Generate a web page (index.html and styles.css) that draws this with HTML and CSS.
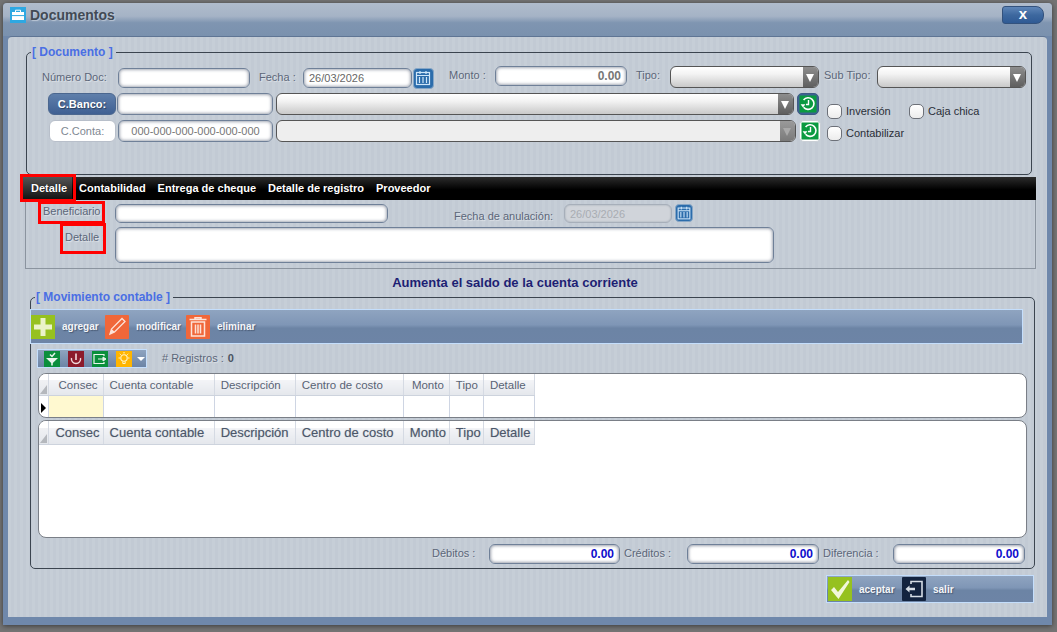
FILE: index.html
```html
<!DOCTYPE html>
<html lang="es">
<head>
  <meta charset="UTF-8" />
  <title>Documentos</title>
  <link rel="stylesheet" href="styles.css">
</head>
<body>

  <svg class="defs" width="0" height="0">
    <symbol id="ico-cal" viewBox="0 0 20 20">
      <rect x="3.5" y="4.5" width="13" height="12" fill="none" stroke="#cfe6f9" stroke-width="1.2"/>
      <path d="M3.5 7.5h13M7 3v3M13 3v3M6.5 9v6M10 9v6M13.5 9v6" stroke="#cfe6f9" stroke-width="1.2" fill="none"/>
    </symbol>
    <symbol id="ico-refresh" viewBox="0 0 20 20">
      <rect x="1.500" y="1.500" width="17" height="17" fill="#0a9a40"/>
      <path d="M5.600 13.200A5.800 5.800 0 1 0 5.600 6" fill="none" stroke="#fff" stroke-width="1.600"/>
      <path d="M2.600 10.300h4.800L5 13.400z" fill="#fff"/>
      <path d="M10.500 6v4.500H8" fill="none" stroke="#fff" stroke-width="1.400"/>
    </symbol>
  </svg>

  <div class="window">
    <div class="titlebar">
      <svg class="title-icon" viewBox="0 0 16 16" width="16" height="16">
        <rect width="16" height="16" fill="#2ea8e2"/>
        <path d="M2 5h12v8H2z" fill="#fff"/>
        <path d="M5.5 5V3.2h5V5" fill="none" stroke="#fff" stroke-width="1"/>
        <path d="M2 8.6h12" stroke="#2ea8e2" stroke-width="1"/>
      </svg>
      <span class="title-text">Documentos</span>
      <div class="close-btn">x</div>
    </div>

    <div class="panel">

      <fieldset class="group group-doc">
        <legend>[ Documento ]</legend>

        <div class="row row-1">
          <span class="lbl w-num">Número Doc:</span>
          <div class="field w-132"></div>
          <span class="lbl w-fecha">Fecha :</span>
          <div class="field date w-109">26/03/2026</div>
          <div class="cal-btn"><svg width="20" height="20"><use href="#ico-cal"/></svg></div>
          <span class="lbl lbl-up w-monto">Monto :</span>
          <div class="field num field-up w-132">0.00</div>
          <span class="lbl lbl-up w-tipo">Tipo:</span>
          <div class="select select-up w-149"><span class="arrow"></span></div>
          <span class="lbl lbl-up w-sub">Sub Tipo:</span>
          <div class="select select-up w-149"><span class="arrow"></span></div>
        </div>

        <div class="accounts">
          <div class="acc-rows">
            <div class="row row-2">
              <div class="side-btn side-on">C.Banco:</div>
              <div class="field"></div>
              <div class="select w-518"><span class="arrow"></span></div>
              <div class="go-btn go-on"><svg width="20" height="20"><use href="#ico-refresh"/></svg></div>
            </div>
            <div class="row row-3">
              <div class="side-btn">C.Conta:</div>
              <div class="field mask w-155">000-000-000-000-000-000</div>
              <div class="select off w-520"><span class="arrow"></span></div>
              <div class="go-btn"><svg width="20" height="20"><use href="#ico-refresh"/></svg></div>
            </div>
          </div>
          <div class="checks">
            <div class="check-row">
              <span class="check"></span><span class="check-lbl w-inv">Inversión</span>
              <span class="check"></span><span class="check-lbl">Caja chica</span>
            </div>
            <div class="check-row">
              <span class="check"></span><span class="check-lbl">Contabilizar</span>
            </div>
          </div>
        </div>
      </fieldset>

      <div class="tabs">
        <span class="tab tab-on">Detalle</span>
        <span class="tab">Contabilidad</span>
        <span class="tab">Entrega de cheque</span>
        <span class="tab">Detalle de registro</span>
        <span class="tab">Proveedor</span>
      </div>

      <div class="tab-panel">
        <div class="row tab-row">
          <span class="lbl w-ben">Beneficiario</span>
          <div class="field w-273"></div>
          <span class="lbl w-anul">Fecha de anulación:</span>
          <div class="field date disabled w-108">26/03/2026</div>
          <div class="cal-btn cal-small"><svg width="18" height="18"><use href="#ico-cal"/></svg></div>
        </div>
        <div class="row detail-row">
          <span class="lbl w-det">Detalle :</span>
          <div class="field w-659 tall"></div>
        </div>
      </div>

      <div class="notice">Aumenta el saldo de la cuenta corriente</div>

      <fieldset class="group group-mov">
        <legend>[ Movimiento contable ]</legend>

        <div class="toolbar">
          <span class="tool-ico"><svg width="24" height="24" viewBox="0 0 24 24">
            <rect width="24" height="24" fill="#96c11f"/>
            <path d="M9.500 3h5v6.500h6.500v5h-6.500v6.500h-5v-6.500h-6.500v-5h6.500z" fill="#eaf3c8"/>
          </svg></span>
          <span class="tool-lbl w-agr">agregar</span>
          <span class="tool-ico"><svg width="24" height="24" viewBox="0 0 24 24">
            <rect width="24" height="24" rx="1" fill="#f0673a"/>
            <path d="M5 19l1.500-5L17 3.500l3 3L9.500 17z" fill="none" stroke="#fde3d8" stroke-width="1.300"/>
            <path d="M5 19l1.500-5 3.500 3z" fill="#fde3d8"/>
          </svg></span>
          <span class="tool-lbl w-mod">modificar</span>
          <span class="tool-ico"><svg width="24" height="24" viewBox="0 0 24 24">
            <rect width="24" height="24" rx="1" fill="#f0673a"/>
            <path d="M3.500 4.500h17M9 4.500V2.800h6v1.700" fill="none" stroke="#fde3d8" stroke-width="1.500"/>
            <path d="M5.500 7h13v14h-13z" fill="none" stroke="#fde3d8" stroke-width="1.500"/>
            <path d="M9.500 9.500v9M12 9.500v9M14.500 9.500v9" stroke="#fde3d8" stroke-width="1.500"/>
          </svg></span>
          <span class="tool-lbl">eliminar</span>
        </div>

        <div class="row reg-row">
          <div class="mini-bar">
            <svg width="16" height="16" viewBox="0 0 16 16">
              <rect width="16" height="16" fill="#0a8f3c"/>
              <path d="M2 7h12L8.800 12v2.500h-1.600V12z" fill="#e8f5ec"/>
              <path d="M6 3.500l2 2 3-3.500" fill="none" stroke="#e8f5ec" stroke-width="1.500"/>
            </svg>
            <svg width="16" height="16" viewBox="0 0 16 16">
              <rect width="16" height="16" fill="#8c1a2b"/>
              <path d="M3.500 7a4.600 4.600 0 1 0 9 0" fill="none" stroke="#f3dadd" stroke-width="1.400"/>
              <path d="M8 2.500V9" stroke="#f3dadd" stroke-width="1.600"/>
            </svg>
            <svg width="16" height="16" viewBox="0 0 16 16">
              <rect width="16" height="16" fill="#0a8f3c"/>
              <path d="M12 5V3.500H2v9h10V11" fill="none" stroke="#e8f5ec" stroke-width="1.200"/>
              <path d="M6 8h6M11 6l3 2-3 2z" stroke="#e8f5ec" fill="#e8f5ec" stroke-width="1"/>
            </svg>
            <svg width="16" height="16" viewBox="0 0 16 16">
              <rect width="16" height="16" fill="#ffb500"/>
              <circle cx="8" cy="7" r="3.200" fill="none" stroke="#fff4c6" stroke-width="1.100"/>
              <path d="M6.800 10.500v2h2.400v-2M8 1v1.500M2.500 7H4M12 7h1.500M3.800 2.800l1 1M12.200 2.800l-1 1" fill="none" stroke="#fff4c6" stroke-width="1"/>
            </svg>
            <span class="mini-arrow"></span>
          </div>
          <span class="reg-lbl"># Registros :</span>
          <span class="reg-num">0</span>
        </div>

        <div class="grid grid-edit">
          <table>
            <colgroup>
              <col class="c0"><col class="c1"><col class="c2"><col class="c3"><col class="c4"><col class="c5"><col class="c6"><col class="c7">
            </colgroup>
            <thead>
              <tr>
                <th class="corner"></th><th class="r">Consec</th><th>Cuenta contable</th><th>Descripción</th><th>Centro de costo</th><th class="r">Monto</th><th>Tipo</th><th>Detalle</th>
              </tr>
            </thead>
            <tbody>
              <tr>
                <td class="marker"><span class="pointer"></span></td><td class="current"></td><td></td><td></td><td></td><td></td><td></td><td></td>
              </tr>
            </tbody>
          </table>
        </div>

        <div class="grid grid-list">
          <table>
            <colgroup>
              <col class="c0"><col class="c1"><col class="c2"><col class="c3"><col class="c4"><col class="c5"><col class="c6"><col class="c7">
            </colgroup>
            <thead>
              <tr>
                <th class="corner"></th><th class="r">Consec</th><th>Cuenta contable</th><th>Descripción</th><th>Centro de costo</th><th class="r">Monto</th><th>Tipo</th><th>Detalle</th>
              </tr>
            </thead>
          </table>
        </div>

        <div class="totals">
          <span class="lbl w-deb">Débitos :</span>
          <div class="field total w-131">0.00</div>
          <span class="lbl w-cre">Créditos :</span>
          <div class="field total w-132">0.00</div>
          <span class="lbl w-dif">Diferencia :</span>
          <div class="field total w-132">0.00</div>
        </div>
      </fieldset>

      <div class="actions">
        <span class="tool-ico"><svg width="24" height="24" viewBox="0 0 24 24">
          <rect width="24" height="24" fill="#96c11f"/>
          <path d="M3 13l3-3 4 5L20 3l1.500 2L10.500 22z" fill="#f2f7da"/>
        </svg></span>
        <span class="tool-lbl w-ace">aceptar</span>
        <span class="tool-ico"><svg width="24" height="24" viewBox="0 0 24 24">
          <rect width="24" height="24" rx="1" fill="#13233f"/>
          <path d="M9 7V4.500h11v15H9V17" fill="none" stroke="#d6dde6" stroke-width="1.600"/>
          <path d="M3.500 12L7.500 8.500v7zM7 10.800h6v2.400H7z" fill="#d6dde6"/>
        </svg></span>
        <span class="tool-lbl">salir</span>
      </div>

      <!-- red marks drawn on top of the screen -->
      <div class="mark mark-tab"></div>
      <div class="mark mark-ben"></div>
      <div class="mark mark-det"></div>
    </div>
  </div>

</body>
</html>
```

FILE: styles.css
```css
* {
  box-sizing: border-box;
}

body {
  margin: 0;
  width: 1057px;
  height: 632px;
  overflow: hidden;
  background: #747474;
  font-family: "Liberation Sans", Arial, sans-serif;
  font-size: 11px;
}

.defs {
  position: absolute;
}

.window {
  width: 1049px;
  height: 622px;
  margin: 3px 0 0 3px;
  padding: 0 5px;
  background: #6f88ab;
  border-radius: 4px 4px 0 0;
  box-shadow: 0 1px 5px rgba(0, 0, 0, 0.5);
}

.titlebar {
  display: flex;
  align-items: center;
  height: 33px;
  margin: 0 -5px;
  padding: 0 7px 10px;
  background: linear-gradient(#b0bccc, #a5b3c6 40%, #7f95b1 60%, #7a91ae);
  border-radius: 4px 4px 0 0;
}

.title-icon {
  margin-right: 4px;
}

.title-text {
  flex: 1;
  font-size: 14px;
  font-weight: bold;
  color: #424a55;
  text-shadow: 1px 1px 1px rgba(255, 255, 255, 0.4);
}

.close-btn {
  width: 42px;
  height: 18px;
  margin-right: 1px;
  background: linear-gradient(#5f86b8, #3d689f 50%, #2f5a94);
  border: 1px solid #33527d;
  border-radius: 3px 8px 8px 3px;
  color: #fff;
  font-size: 15px;
  font-weight: bold;
  line-height: 13px;
  text-align: center;
}

.panel {
  position: relative;
  height: 581px;
  padding-top: 8px;
  background: repeating-linear-gradient(90deg, #c6ced7 0 3px, #c2cad4 3px 6px);
  border-radius: 4px 4px 0 0;
  border-top: 1px solid #5f7594;
}

.group {
  margin: 0;
  padding: 0;
  border: 1px solid #3b444f;
  border-radius: 5px;
}

.group legend {
  margin-left: 4px;
  padding: 0 3px 0 1px;
  color: #4a6fe4;
  font-size: 12px;
  font-weight: bold;
  line-height: 15px;
}

.group-doc {
  width: 1006px;
  height: 130px;
  margin-left: 18px;
}

.row {
  display: flex;
}

.row-1 {
  margin-top: 6px;
  height: 23px;
  padding-top: 2px;
}

.lbl {
  color: #5b6679;
  line-height: 19px;
  white-space: nowrap;
  text-shadow: 1px 1px 1px rgba(255, 255, 255, 0.5);
}

.lbl-up,
.field-up,
.select-up {
  margin-top: -2px;
}

.w-num {
  width: 91px;
  padding-left: 15px;
}

.w-fecha {
  width: 53px;
  padding-left: 9px;
}

.w-monto {
  width: 61px;
  padding-left: 15px;
}

.w-tipo {
  width: 43px;
  padding-left: 9px;
}

.w-sub {
  width: 58px;
  padding-left: 5px;
}

.field {
  height: 20px;
  padding: 0 5px;
  background: #fff;
  border: 1px solid #6f8098;
  border-radius: 6px;
  box-shadow: inset 0 0 3px 1px rgba(90, 100, 120, 0.55);
  color: #555;
  line-height: 18px;
  white-space: nowrap;
}

.date {
  font-size: 11px;
  color: #666;
}

.num {
  font-weight: bold;
  font-size: 12px;
  color: #777;
  text-align: right;
}

.mask {
  font-size: 11px;
  color: #777;
  text-align: center;
  padding: 0;
  height: 22px;
  line-height: 20px;
  margin-left: -1px;
}

.disabled {
  background: #d0d4da;
  color: #a9adb3;
  box-shadow: inset 0 0 2px #9aa3ae;
  border-color: #a7afba;
}

.total {
  font-size: 12px;
  font-weight: bold;
  color: #0e0ecc;
  text-align: right;
  box-shadow: inset 0 0 3px 1px rgba(90, 100, 120, 0.6);
}

.w-108 { width: 108px; }
.w-109 { width: 109px; }
.w-131 { width: 131px; }
.w-132 { width: 132px; }
.w-149 { width: 149px; }
.w-155 { width: 155px; }
.w-273 { width: 273px; }
.w-518 { width: 518px; }
.w-520 { width: 520px; }
.w-659 { width: 659px; }

.cal-btn {
  width: 21px;
  height: 21px;
  margin-left: 1px;
  background: #2b6cab;
  border: 1px solid #86a6c6;
  border-radius: 4px;
}

.cal-btn svg {
  display: block;
  margin: -1px 0 0 -1px;
}

.cal-small {
  width: 18px;
  height: 18px;
  margin-left: 3px;
}

.select {
  position: relative;
  height: 22px;
  background: linear-gradient(#fff, #f3f3f3 35%, #c9c9c9);
  border: 1px solid #555;
  border-radius: 6px;
}

.select.off {
  background: #eeeeee;
}

.select .arrow {
  position: absolute;
  right: 0;
  top: 0;
  bottom: 0;
  width: 15px;
  background: linear-gradient(#8d8d8d, #5f5f5f);
  border-radius: 0 5px 5px 0;
}

.select .arrow::after {
  content: "";
  position: absolute;
  left: 3px;
  top: 7px;
  border-style: solid;
  border-width: 8px 4px 0;
  border-color: #fff transparent transparent;
}

.select.off .arrow {
  background: linear-gradient(#9a9a9a, #7a7a7a);
}

.select.off .arrow::after {
  border-top-color: #a9a9a9;
}

.accounts {
  display: flex;
}

.acc-rows {
  width: 794px;
}

.row-2 {
  gap: 3px;
  margin-top: 4px;
  padding-left: 21px;
}

.row-3 {
  gap: 3px;
  margin-top: 5px;
  padding-left: 22px;
}

.row-2 .field {
  height: 22px;
  width: 156px;
  margin-left: -2px;
}

.side-btn {
  width: 67px;
  height: 22px;
  border: 1px solid #b8bfca;
  border-radius: 6px;
  background: #fff;
  color: #808892;
  font-size: 11px;
  line-height: 20px;
  text-align: center;
}

.side-btn.side-on {
  width: 68px;
  background: linear-gradient(#5f7fab, #3f6093);
  border-color: #4b678f;
  color: #fff;
  font-weight: bold;
  text-shadow: 1px 1px 1px rgba(0, 0, 0, 0.4);
}

.go-btn {
  width: 22px;
  height: 22px;
  background: #fff;
  border: 1px solid #c9ced5;
  border-radius: 5px;
}

.go-btn.go-on {
  background: #3e6293;
  border-color: #3e5a84;
}

.checks {
  padding-top: 11px;
  margin-left: 6px;
}

.check-row {
  display: flex;
  align-items: center;
  height: 22px;
}

.check {
  width: 15px;
  height: 15px;
  background: linear-gradient(#fff, #ececec);
  border: 1px solid #6c7078;
  border-radius: 5px;
}

.check-lbl {
  margin-left: 4px;
  color: #2a2f38;
  font-size: 11px;
}

.w-inv {
  width: 63px;
}

.tabs {
  display: flex;
  align-items: center;
  width: 1016px;
  height: 23px;
  margin: 2px 0 0 12px;
  padding-left: 1px;
  background: linear-gradient(#2c2c2c, #000 55%);
}

.tab {
  padding: 0 6px;
  color: #fff;
  font-size: 11px;
  font-weight: bold;
  line-height: 23px;
  text-shadow: 0 0 1px #000;
}

.tab-on {
  width: 51px;
  padding: 0 0 0 10px;
  margin-right: 1px;
  background: linear-gradient(#555, #111);
}

.tab-panel {
  width: 1011px;
  height: 69px;
  margin-left: 17px;
  border: 1px solid #8b949f;
  border-top: 0;
}

.tab-row {
  padding-top: 4px;
  height: 27px;
}

.w-ben {
  width: 89px;
  padding-left: 17px;
  margin-top: -2px;
}

.w-anul {
  width: 176px;
  padding-left: 66px;
  margin-top: 3px;
}

.tab-row .field {
  height: 19px;
}

.w-det {
  width: 89px;
  padding-left: 39px;
  margin-top: 1px;
}

.tall {
  height: 36px;
}

.notice {
  height: 21px;
  padding: 7px 25px 0 0;
  color: #1d1f73;
  font-size: 13px;
  font-weight: bold;
  line-height: 14px;
  text-align: center;
}

.group-mov {
  width: 1005px;
  height: 279px;
  margin-left: 22px;
}

.toolbar,
.actions {
  display: flex;
  align-items: center;
  background: linear-gradient(#8fa4c0, #7f96b6 45%, #6c84a5 55%, #6d84a6);
  border: 1px solid #c4defc;
}

.toolbar {
  width: 993px;
  height: 35px;
  margin: 4px 0 0 -1px;
}

.tool-ico {
  display: flex;
  flex: none;
}

.tool-lbl {
  margin-left: 7px;
  color: #f4f6f9;
  font-size: 10px;
  font-weight: bold;
  text-shadow: 1px 1px 1px rgba(40, 50, 70, 0.5);
}

.w-agr {
  width: 43px;
}

.w-mod {
  width: 50px;
}

.reg-row {
  align-items: center;
  height: 19px;
  margin: 5px 0 0 6px;
}

.mini-bar {
  display: flex;
  align-items: center;
  gap: 8px;
  width: 110px;
  height: 19px;
  padding-left: 6px;
  background: linear-gradient(#8fa4c0, #6c84a5);
  border: 1px solid #c4defc;
}

.mini-arrow {
  border-style: solid;
  border-width: 4px 4px 0;
  border-color: #fff transparent transparent;
  margin-left: -3px;
}

.reg-lbl {
  margin: -2px 0 0 15px;
  color: #5b6679;
  text-shadow: 1px 1px 1px rgba(255, 255, 255, 0.5);
}

.reg-num {
  margin: -1px 0 0 4px;
  color: #4a5361;
  font-weight: bold;
}

.grid {
  width: 989px;
  margin-left: 7px;
  background: #fff;
  border: 1px solid #7a7f87;
  border-radius: 8px;
  overflow: hidden;
}

.grid-edit {
  height: 45px;
  margin-top: 5px;
}

.grid-list {
  height: 118px;
  margin-top: 2px;
}

table {
  width: 496px;
  border-collapse: collapse;
  table-layout: fixed;
}

.c0 { width: 9px; }
.c1 { width: 55px; }
.c2 { width: 111px; }
.c3 { width: 81px; }
.c4 { width: 108px; }
.c5 { width: 46px; }
.c6 { width: 34px; }
.c7 { width: 51px; }

th {
  height: 21px;
  padding: 2px 5px 0 6px;
  background: linear-gradient(#fff 30%, #f3f4f7 30%, #e4e7ec);
  border-right: 1px solid #d5dae3;
  border-bottom: 1px solid #cdd3dd;
  color: #596375;
  font-size: 11.500px;
  font-weight: normal;
  text-align: left;
  white-space: nowrap;
}

th.r {
  text-align: right;
}

th.corner {
  position: relative;
  padding: 0;
  background: linear-gradient(#fff 30%, #f0f1f4 30%, #e4e7ec);
}

th.corner::after {
  content: "";
  position: absolute;
  left: 1px;
  bottom: 1px;
  border-style: solid;
  border-width: 0 0 9px 7px;
  border-color: transparent transparent #b5b8bd;
}

td {
  height: 22px;
  padding: 0;
  border-right: 1px solid #ced5e3;
  border-bottom: 1px solid #ced5e3;
}

td.marker {
  position: relative;
  border-bottom: 0;
}

.pointer {
  position: absolute;
  left: 2px;
  top: 7px;
  border-style: solid;
  border-width: 5px 0 5px 5px;
  border-color: transparent transparent transparent #000;
}

td.current {
  background: #fff9d0;
}

.grid-list th {
  height: 23px;
  padding-top: 0;
  color: #4c576a;
  font-size: 13px;
  padding-left: 6px;
  padding-right: 3px;
  text-shadow: 0 0 1px rgba(76, 87, 106, 0.4);
}

.totals {
  display: flex;
  height: 20px;
  margin-top: 6px;
  padding-left: 401px;
}

.w-deb {
  width: 57px;
}

.w-cre {
  width: 63px;
  margin-left: 4px;
}

.w-dif {
  width: 70px;
  margin-left: 4px;
}

.actions {
  width: 208px;
  height: 28px;
  margin: 6px 0 0 818px;
  padding-left: 1px;
}

.w-ace {
  width: 43px;
}

/* red marks over the form */
.mark {
  position: absolute;
  border: 3px solid #f00;
}

.mark-tab {
  left: 12px;
  top: 137px;
  width: 56px;
  height: 28px;
}

.mark-ben {
  left: 30px;
  top: 164px;
  width: 67px;
  height: 23px;
}

.mark-det {
  left: 52px;
  top: 186px;
  width: 46px;
  height: 31px;
}
```
